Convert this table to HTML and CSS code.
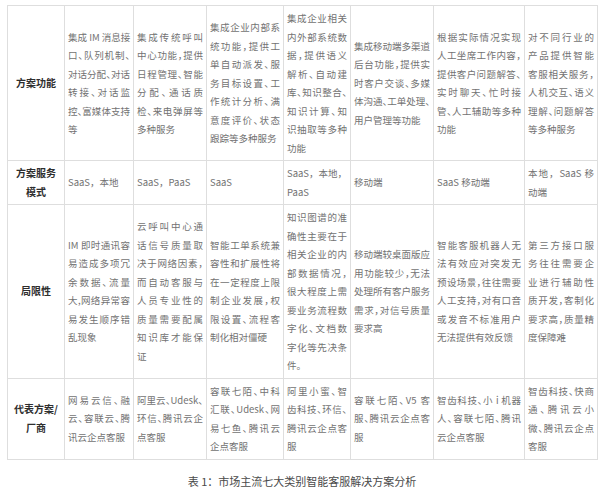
FILE: index.html
```html
<!DOCTYPE html>
<html lang="zh-CN">
<head>
<meta charset="utf-8">
<title>市场主流七大类别智能客服解决方案分析</title>
<link rel="stylesheet" href="styles.css">
</head>
<body>
<div class="page">
<table class="grid">
<colgroup>
<col class="c1"><col class="c2"><col class="c3"><col class="c4"><col class="c5"><col class="c6"><col class="c7"><col class="c8">
</colgroup>
<tbody>
<tr class="r1">
<th>方案功能</th>
<td><span class="ln">集成 IM 消息接</span><span class="ln">口、队列机制、</span><span class="ln">对话分配、对话</span><span class="ln">转接、对话监</span><span class="ln">控、富媒体支持</span><span class="ln end">等</span></td>
<td><span class="ln">集成传统呼叫</span><span class="ln">中心功能，提供</span><span class="ln">日程管理、智能</span><span class="ln">分配、通话质</span><span class="ln">检、来电弹屏等</span><span class="ln end">多种服务</span></td>
<td><span class="ln">集成企业内部系</span><span class="ln">统功能，提供工</span><span class="ln">单自动派发、服</span><span class="ln">务目标设置、工</span><span class="ln">作统计分析、满</span><span class="ln">意度评价、状态</span><span class="ln end">跟踪等多种服务</span></td>
<td><span class="ln">集成企业相关</span><span class="ln">内外部系统数</span><span class="ln">据，提供语义</span><span class="ln">解析、自动建</span><span class="ln">库、知识整合、</span><span class="ln">知识计算、知</span><span class="ln">识抽取等多种</span><span class="ln end">功能</span></td>
<td><span class="ln">集成移动端多渠道</span><span class="ln">后台功能，提供实</span><span class="ln">时客户交谈、多媒</span><span class="ln">体沟通、工单处理、</span><span class="ln end">用户管理等功能</span></td>
<td><span class="ln">根据实际情况实现</span><span class="ln">人工坐席工作内容，</span><span class="ln">提供客户问题解答、</span><span class="ln">实时聊天、忙时接</span><span class="ln">管、人工辅助等多种</span><span class="ln end">功能</span></td>
<td><span class="ln">对不同行业的</span><span class="ln">产品提供智能</span><span class="ln">客服相关服务，</span><span class="ln">人机交互、语义</span><span class="ln">理解、问题解答</span><span class="ln end">等多种服务</span></td>
</tr>
<tr class="r2">
<th><span class="hl">方案服务</span><span class="hl">模式</span></th>
<td><span class="ln end">SaaS，本地</span></td>
<td><span class="ln end">SaaS，PaaS</span></td>
<td><span class="ln end">SaaS</span></td>
<td><span class="ln">SaaS，本地，</span><span class="ln end">PaaS</span></td>
<td><span class="ln end">移动端</span></td>
<td><span class="ln end">SaaS 移动端</span></td>
<td><span class="ln">本地，SaaS 移</span><span class="ln end">动端</span></td>
</tr>
<tr class="r3">
<th>局限性</th>
<td><span class="ln">IM 即时通讯容</span><span class="ln">易造成多项冗</span><span class="ln">余数据、流量</span><span class="ln">大,网络异常容</span><span class="ln">易发生顺序错</span><span class="ln end">乱现象</span></td>
<td><span class="ln">云呼叫中心通</span><span class="ln">话信号质量取</span><span class="ln">决于网络因素，</span><span class="ln">而自动客服与</span><span class="ln">人员专业性的</span><span class="ln">质量需要配属</span><span class="ln">知识库才能保</span><span class="ln end">证</span></td>
<td><span class="ln">智能工单系统兼</span><span class="ln">容性和扩展性将</span><span class="ln">在一定程度上限</span><span class="ln">制企业发展，权</span><span class="ln">限设置、流程客</span><span class="ln end">制化相对僵硬</span></td>
<td><span class="ln">知识图谱的准</span><span class="ln">确性主要在于</span><span class="ln">相关企业的内</span><span class="ln">部数据情况，</span><span class="ln">很大程度上需</span><span class="ln">要业务流程数</span><span class="ln">字化、文档数</span><span class="ln">字化等先决条</span><span class="ln end">件。</span></td>
<td><span class="ln">移动端较桌面版应</span><span class="ln">用功能较少，无法</span><span class="ln">处理所有客户服务</span><span class="ln">需求，对信号质量</span><span class="ln end">要求高</span></td>
<td><span class="ln">智能客服机器人无</span><span class="ln">法有效应对突发无</span><span class="ln">预设场景，往往需要</span><span class="ln">人工支持，对有口音</span><span class="ln">或发音不标准用户</span><span class="ln end">无法提供有效反馈</span></td>
<td><span class="ln">第三方接口服</span><span class="ln">务往往需要企</span><span class="ln">业进行辅助性</span><span class="ln">质开发，客制化</span><span class="ln">要求高，质量精</span><span class="ln end">度保障难</span></td>
</tr>
<tr class="r4">
<th><span class="hl">代表方案/</span><span class="hl">厂商</span></th>
<td><span class="ln">网易云信、融</span><span class="ln">云、容联云、腾</span><span class="ln end">讯云企点客服</span></td>
<td><span class="ln">阿里云、Udesk、</span><span class="ln">环信、腾讯云企</span><span class="ln end">点客服</span></td>
<td><span class="ln">容联七陌、中科</span><span class="ln">汇联、Udesk、网</span><span class="ln">易七鱼、腾讯云</span><span class="ln end">企点客服</span></td>
<td><span class="ln">阿里小蜜、智</span><span class="ln">齿科技、环信、</span><span class="ln">腾讯云企点客</span><span class="ln end">服</span></td>
<td><span class="ln">容联七陌、V5 客</span><span class="ln">服、腾讯云企点客</span><span class="ln end">服</span></td>
<td><span class="ln">智齿科技、小 i 机器</span><span class="ln">人、容联七陌、腾讯</span><span class="ln end">云企点客服</span></td>
<td><span class="ln">智齿科技、快商</span><span class="ln">通、腾讯云小</span><span class="ln">微、腾讯云企点</span><span class="ln end">客服</span></td>
</tr>
</tbody>
</table>
<p class="caption">表 1：市场主流七大类别智能客服解决方案分析</p>
</div>
</body>
</html>
```
FILE: styles.css
```css
html, body {
  margin: 0;
  padding: 0;
  background: #ffffff;
}

.page {
  padding: 5px 0 0 7px;
  font-family: "Noto Sans CJK SC", "Noto Sans", sans-serif;
}

.grid {
  border-collapse: collapse;
  table-layout: fixed;
  width: 590px;
  font-size: 9.5px;
  line-height: 18.5px;
  color: #727272;
  font-feature-settings: "halt";
}

.c1 { width: 57px; }
.c2 { width: 69px; }
.c3 { width: 73px; }
.c4 { width: 77px; }
.c5 { width: 67px; }
.c6 { width: 83px; }
.c7 { width: 91px; }
.c8 { width: 73px; }

.grid th,
.grid td {
  border: 1px solid #dedede;
  padding: 3px 3px;
  vertical-align: middle;
}

.grid th {
  font-weight: 700;
  color: #2e2e2e;
  text-align: center;
  font-size: 10px;
}

.r2 td {
  font-feature-settings: normal;
}

.hl {
  display: block;
}

.ln {
  display: block;
  white-space: nowrap;
  text-align: justify;
  text-align-last: justify;
}

.ln.end {
  text-align: left;
  text-align-last: left;
}

.caption {
  margin: 14px 0 0;
  width: 590px;
  text-align: center;
  font-size: 11px;
  line-height: 14px;
  color: #4a4a4a;
}
```
